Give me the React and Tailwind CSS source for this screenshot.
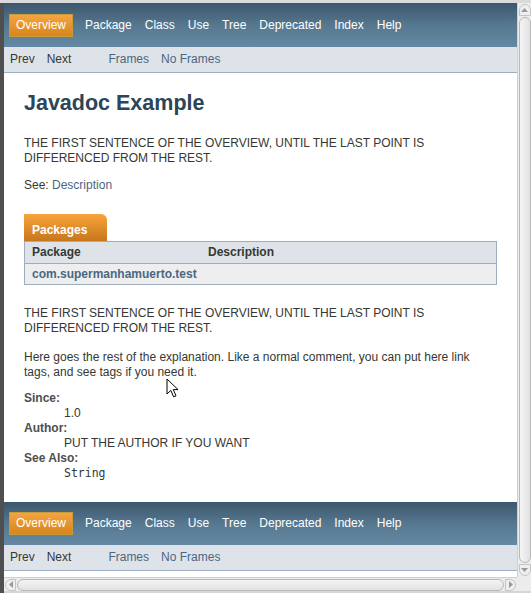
const navItems = ['Package', 'Class', 'Use', 'Tree', 'Deprecated', 'Index', 'Help'];

const TopNav = ({ top }) => (
  <div>
    <div
      className={
        top
          ? 'h-[44px] flex items-center pl-[5px] pt-[1px] gap-[12px] bg-gradient-to-b from-[#3c566d] via-[#56788f] to-[#6589a4]'
          : 'h-[43px] flex items-center pl-[5px] gap-[12px] bg-gradient-to-b from-[#3c566d] via-[#56788f] to-[#6589a4]'
      }
    >
      <div className="h-[23px] px-[6px] flex items-center border border-[#c99a3c] bg-gradient-to-b from-[#f5a53f] to-[#d6861b] text-white">
        Overview
      </div>
      <div className="flex gap-[13px] text-white">
        {navItems.map((item) => (
          <span key={item}>{item}</span>
        ))}
      </div>
    </div>
    <div className="h-[26px] flex items-center pl-[6px] bg-[#dee3e9] border-b border-[#9eadc0]">
      <span className="text-[#353833]">Prev</span>
      <span className="ml-[12px] text-[#353833]">Next</span>
      <span className="ml-[37px] text-[#4a6782]">Frames</span>
      <span className="ml-[12px] text-[#4a6782]">No Frames</span>
    </div>
  </div>
);

const Cursor = () => (
  <svg className="absolute left-[166px] top-[378px]" width="14" height="21" viewBox="0 0 14 21">
    <path
      d="M1 1 L1 16 L4.8 12.4 L7.6 18.8 L10 17.8 L7.3 11.6 L12 11.6 Z"
      fill="white"
      stroke="black"
      strokeWidth="1"
      strokeLinejoin="round"
    />
  </svg>
);

const ArrowUp = () => (
  <svg width="7" height="4" viewBox="0 0 7 4"><path d="M0 4 L3.5 0 L7 4 Z" fill="#9a9a9a" /></svg>
);
const ArrowDown = () => (
  <svg width="7" height="4" viewBox="0 0 7 4"><path d="M0 0 L3.5 4 L7 0 Z" fill="#9a9a9a" /></svg>
);
const ArrowLeft = () => (
  <svg width="4" height="7" viewBox="0 0 4 7"><path d="M4 0 L0 3.5 L4 7 Z" fill="#9a9a9a" /></svg>
);
const ArrowRight = () => (
  <svg width="4" height="7" viewBox="0 0 4 7"><path d="M0 0 L4 3.5 L0 7 Z" fill="#9a9a9a" /></svg>
);

const App = () => {
  return (
    <div
      className="relative w-[531px] h-[593px] overflow-hidden bg-[#d6d6d6] flex flex-col text-[12px] leading-[15px]"
      style={{ fontFamily: '"Liberation Sans", Arial, sans-serif' }}
    >
      <div className="h-[3px] bg-[#dadada]" />
      <div className="flex h-[588px]">
        <div className="w-[4px] bg-[#4f4f4f]" />
        <div className="w-[513px] flex flex-col">
          <div className="h-[574px] bg-white flex flex-col overflow-hidden">
            <TopNav top />
            <div className="px-[20px] pb-[21px] text-[#353833]">
              <h1 className="mt-[17px] text-[21.5px] leading-[26px] font-bold text-[#2c4557]">Javadoc Example</h1>
              <p className="mt-[20px]">
                THE FIRST SENTENCE OF THE OVERVIEW, UNTIL THE LAST POINT IS DIFFERENCED FROM THE REST.
              </p>
              <p className="mt-[12px]">
                See: <span className="text-[#4a6782]">Description</span>
              </p>
              <div className="mt-[21px]">
                <div className="w-[83px] h-[27px] pl-[8px] pt-[9px] rounded-tr-[6px] bg-gradient-to-b from-[#f8a43a] to-[#c8761d] text-white font-bold">
                  Packages
                </div>
                <div className="border border-[#9eadc0]">
                  <div className="h-[22px] flex items-center bg-[#dee3e9] border-b border-[#9eadc0] pl-[7px] font-bold">
                    <span className="w-[176px]">Package</span>
                    <span>Description</span>
                  </div>
                  <div className="h-[20px] flex items-center bg-[#eeeeef] pl-[7px] font-bold text-[#4a6782]">
                    com.supermanhamuerto.test
                  </div>
                </div>
              </div>
              <p className="mt-[21px]">
                THE FIRST SENTENCE OF THE OVERVIEW, UNTIL THE LAST POINT IS DIFFERENCED FROM THE REST.
              </p>
              <p className="mt-[14px]">
                Here goes the rest of the explanation. Like a normal comment, you can put here link tags, and see tags if you need it.
              </p>
              <dl className="mt-[11px]">
                <dt className="font-bold text-[#4e4e4e]">Since:</dt>
                <dd className="pl-[40px]">1.0</dd>
                <dt className="font-bold text-[#4e4e4e]">Author:</dt>
                <dd className="pl-[40px]">PUT THE AUTHOR IF YOU WANT</dd>
                <dt className="font-bold text-[#4e4e4e]">See Also:</dt>
                <dd className="pl-[40px] text-[11.5px]" style={{ fontFamily: '"DejaVu Sans Mono", monospace' }}>
                  String
                </dd>
              </dl>
            </div>
            <TopNav />
            <div className="h-[5px] bg-white" />
          </div>
          <div className="h-[14px] bg-[#ececec] flex items-center pl-[1px] pr-[1px] gap-[1px] border-t border-[#d0d0d0]">
            <div className="w-[11px] h-[12px] flex items-center justify-center rounded-l-full border border-[#c4c4c4] bg-[#eeeeee]">
              <ArrowLeft />
            </div>
            <div className="flex-1 h-[12px] rounded-full border border-[#b8b8b8] bg-gradient-to-b from-[#f4f4f4] to-[#e2e2e2]" />
            <div className="w-[11px] h-[12px] flex items-center justify-center rounded-r-full border border-[#c4c4c4] bg-[#eeeeee]">
              <ArrowRight />
            </div>
          </div>
        </div>
        <div className="w-[14px] flex flex-col">
          <div className="h-[574px] bg-[#ececec] flex flex-col items-center py-[1px] gap-[1px] border-l border-[#d0d0d0]">
            <div className="w-[12px] h-[12px] flex items-center justify-center rounded-t-full border border-[#c4c4c4] bg-[#eeeeee]">
              <ArrowUp />
            </div>
            <div className="flex-1 w-[12px] rounded-full border border-[#b8b8b8] bg-gradient-to-r from-[#f4f4f4] to-[#e2e2e2]" />
            <div className="w-[12px] h-[12px] flex items-center justify-center rounded-b-full border border-[#c4c4c4] bg-[#eeeeee]">
              <ArrowDown />
            </div>
          </div>
          <div className="h-[14px] bg-[#ececec]" />
        </div>
      </div>
      <div className="h-[2px] flex">
        <div className="w-[4px] bg-[#4f4f4f]" />
        <div className="flex-1 bg-[#d6d6d6]" />
      </div>
      <Cursor />
    </div>
  );
};

export default App;
